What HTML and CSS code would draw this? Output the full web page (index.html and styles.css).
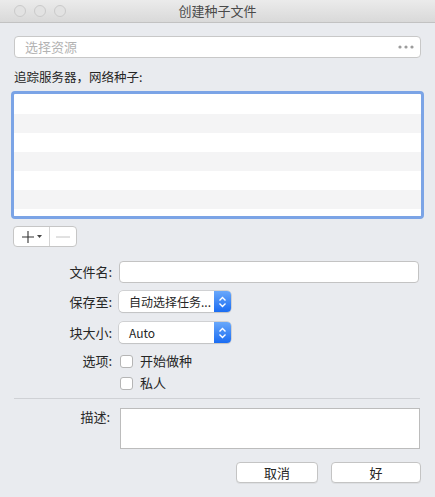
FILE: index.html
```html
<!DOCTYPE html>
<html lang="zh-CN">
<head>
    <meta charset="UTF-8">
    <meta name="viewport" content="width=device-width, initial-scale=1.0">
    <title>创建种子文件</title>
    <link rel="stylesheet" href="styles.css">
</head>
<body>
    <div class="window">
        <div class="titlebar">
            <div class="lights">
                <span class="light"></span>
                <span class="light"></span>
                <span class="light"></span>
            </div>
            <div class="title">创建种子文件</div>
        </div>

        <div class="content">
            <div class="source">
                <span class="placeholder">选择资源</span>
                <span class="dots">
                    <svg width="16" height="4" viewBox="0 0 16 4"><circle cx="2" cy="2" r="1.6" fill="#9c9c9c"/><circle cx="8" cy="2" r="1.6" fill="#9c9c9c"/><circle cx="14" cy="2" r="1.6" fill="#9c9c9c"/></svg>
                </span>
            </div>

            <div class="section-label">追踪服务器，网络种子:</div>

            <div class="tracker-list">
                <div class="row"></div>
                <div class="row alt"></div>
                <div class="row"></div>
                <div class="row alt"></div>
                <div class="row"></div>
                <div class="row alt"></div>
                <div class="row"></div>
            </div>

            <div class="segmented">
                <div class="seg seg-add">
                    <svg width="14" height="14" viewBox="0 0 14 14"><path d="M7 1v12M1 7h12" stroke="#333" stroke-width="1.1" fill="none"/></svg>
                    <svg width="5" height="3" viewBox="0 0 5 3"><path d="M0 0h5L2.5 3z" fill="#444"/></svg>
                </div>
                <div class="seg seg-remove">
                    <svg width="14" height="2" viewBox="0 0 14 2"><path d="M0 1h14" stroke="#c4c4c4" stroke-width="1"/></svg>
                </div>
            </div>

            <div class="form">
                <div class="form-row">
                    <label class="form-label">文件名:</label>
                    <div class="text-field"></div>
                </div>
                <div class="form-row row-popup">
                    <label class="form-label">保存至:</label>
                    <div class="popup">
                        <span class="popup-text">自动选择任务...</span>
                        <span class="stepper">
                            <svg width="9" height="12" viewBox="0 0 9 12"><path d="M1.5 4.5L4.5 1.5L7.5 4.5M1.5 7.5L4.5 10.5L7.5 7.5" stroke="#fff" stroke-width="1.4" fill="none"/></svg>
                        </span>
                    </div>
                </div>
                <div class="form-row row-popup2">
                    <label class="form-label">块大小:</label>
                    <div class="popup">
                        <span class="popup-text">Auto</span>
                        <span class="stepper">
                            <svg width="9" height="12" viewBox="0 0 9 12"><path d="M1.5 4.5L4.5 1.5L7.5 4.5M1.5 7.5L4.5 10.5L7.5 7.5" stroke="#fff" stroke-width="1.4" fill="none"/></svg>
                        </span>
                    </div>
                </div>
                <div class="form-row row-check">
                    <label class="form-label">选项:</label>
                    <span class="checkbox"></span>
                    <span class="check-text">开始做种</span>
                </div>
                <div class="form-row row-check2">
                    <span class="form-label"></span>
                    <span class="checkbox"></span>
                    <span class="check-text">私人</span>
                </div>
            </div>

            <div class="separator"></div>

            <div class="form-row row-desc">
                <label class="form-label">描述:</label>
                <div class="textarea"></div>
            </div>

            <div class="actions">
                <button class="btn btn-cancel">取消</button>
                <button class="btn btn-ok">好</button>
            </div>
        </div>
    </div>
</body>
</html>
```

FILE: styles.css
```css
body {
    margin: 0;
    padding: 0;
    font-family: "Noto Sans CJK SC", "Liberation Sans", sans-serif;
    font-size: 13px;
    line-height: 16px;
    color: #262626;
    background-color: #e9ebef;
}

.window {
    width: 435px;
    height: 497px;
    overflow: hidden;
    background-color: #e9ebef;
}

.titlebar {
    position: relative;
    height: 22px;
    background: linear-gradient(#ebebeb, #d9d9d9);
    border-bottom: 1px solid #c2c2c2;
}

.lights {
    position: absolute;
    left: 14px;
    top: 5px;
    display: flex;
    gap: 8px;
}

.light {
    box-sizing: border-box;
    width: 12px;
    height: 12px;
    border: 1px solid #cacaca;
    border-radius: 50%;
    background-color: #e2e2e2;
}

.title {
    text-align: center;
    line-height: 22px;
    font-size: 13px;
    color: #4a4a4a;
}

.content {
    padding: 13px 15px 0 14px;
}

.source {
    display: flex;
    align-items: center;
    justify-content: space-between;
    box-sizing: border-box;
    height: 22px;
    width: 407px;
    padding: 0 6px 0 10px;
    background-color: #fff;
    border: 1px solid #c8c8c8;
    border-radius: 4px;
}

.placeholder {
    color: #b3b3b3;
    font-size: 13px;
    line-height: 20px;
}

.dots {
    display: flex;
    align-items: center;
}

.section-label {
    margin-top: 11px;
    line-height: 16px;
    font-size: 12.5px;
}

.tracker-list {
    box-sizing: border-box;
    margin: 6px 0 0 -3px;
    width: 413px;
    height: 128px;
    padding-top: 1px;
    border: 3px solid #7ba4e6;
    border-radius: 4px;
    background-color: #fff;
    overflow: hidden;
}

.row {
    height: 19px;
    background-color: #fff;
}

.row.alt {
    background-color: #f4f4f5;
}

.segmented {
    display: flex;
    margin: 7px 0 0 -1px;
    width: 64px;
    height: 21px;
    box-sizing: border-box;
    border: 1px solid #c6c6c6;
    border-radius: 4px;
    background-color: #fff;
}

.seg {
    display: flex;
    align-items: center;
    justify-content: center;
}

.seg-add {
    width: 35px;
    gap: 2px;
    border-right: 1px solid #d4d4d4;
}

.seg-remove {
    flex: 1;
}

.form {
    margin-top: 14px;
}

.form-row {
    display: flex;
    align-items: center;
}

.form-label {
    width: 98px;
    text-align: right;
    flex-shrink: 0;
    margin-right: 7px;
    font-size: 13px;
    line-height: 16px;
}

.text-field {
    box-sizing: border-box;
    width: 300px;
    height: 22px;
    background-color: #fff;
    border: 1px solid #c3c3c3;
    border-radius: 4px;
}

.row-popup {
    margin-top: 8px;
}

.row-popup2 {
    margin-top: 10px;
}

.popup {
    display: flex;
    box-sizing: border-box;
    width: 112px;
    height: 21px;
    background-color: #fff;
    border-radius: 4px;
    box-shadow: 0 0 0 0.5px #b8b8b8, 0 1px 1px rgba(0, 0, 0, 0.12);
    overflow: hidden;
}

.popup-text {
    flex: 1;
    padding-left: 10px;
    font-size: 12px;
    line-height: 21px;
    white-space: nowrap;
}

.stepper {
    display: flex;
    align-items: center;
    justify-content: center;
    width: 17px;
    background: linear-gradient(#69a8fb, #1a6cf2);
}

.row-check {
    margin-top: 10px;
    height: 16px;
}

.row-check2 {
    margin-top: 6px;
    height: 16px;
}

.checkbox {
    box-sizing: border-box;
    width: 13px;
    height: 13px;
    margin-left: 1px;
    background-color: #fff;
    border: 1px solid #b5b5b5;
    border-radius: 3px;
}

.check-text {
    margin-left: 7px;
    font-size: 13px;
    line-height: 16px;
}

.separator {
    margin-top: 7px;
    width: 406px;
    height: 1px;
    background-color: #cfd1d5;
}

.row-desc {
    margin-top: 9px;
    align-items: flex-start;
}

.row-desc .form-label {
    width: 96px;
    margin-right: 10px;
    padding-top: 1px;
}

.textarea {
    box-sizing: border-box;
    width: 300px;
    height: 41px;
    background-color: #fff;
    border: 1px solid #bcbcbc;
}

.actions {
    display: flex;
    justify-content: flex-end;
    gap: 13px;
    margin-top: 13px;
    margin-right: -1px;
}

.btn {
    box-sizing: border-box;
    height: 21px;
    padding: 0;
    background-color: #fff;
    border: 1px solid #c4c4c4;
    border-radius: 4px;
    font-family: "Noto Sans CJK SC", "Liberation Sans", sans-serif;
    font-size: 13px;
    color: #262626;
    line-height: 19px;
    box-shadow: 0 1px 0 rgba(0, 0, 0, 0.05);
}

.btn-cancel {
    width: 82px;
}

.btn-ok {
    width: 90px;
}
```
